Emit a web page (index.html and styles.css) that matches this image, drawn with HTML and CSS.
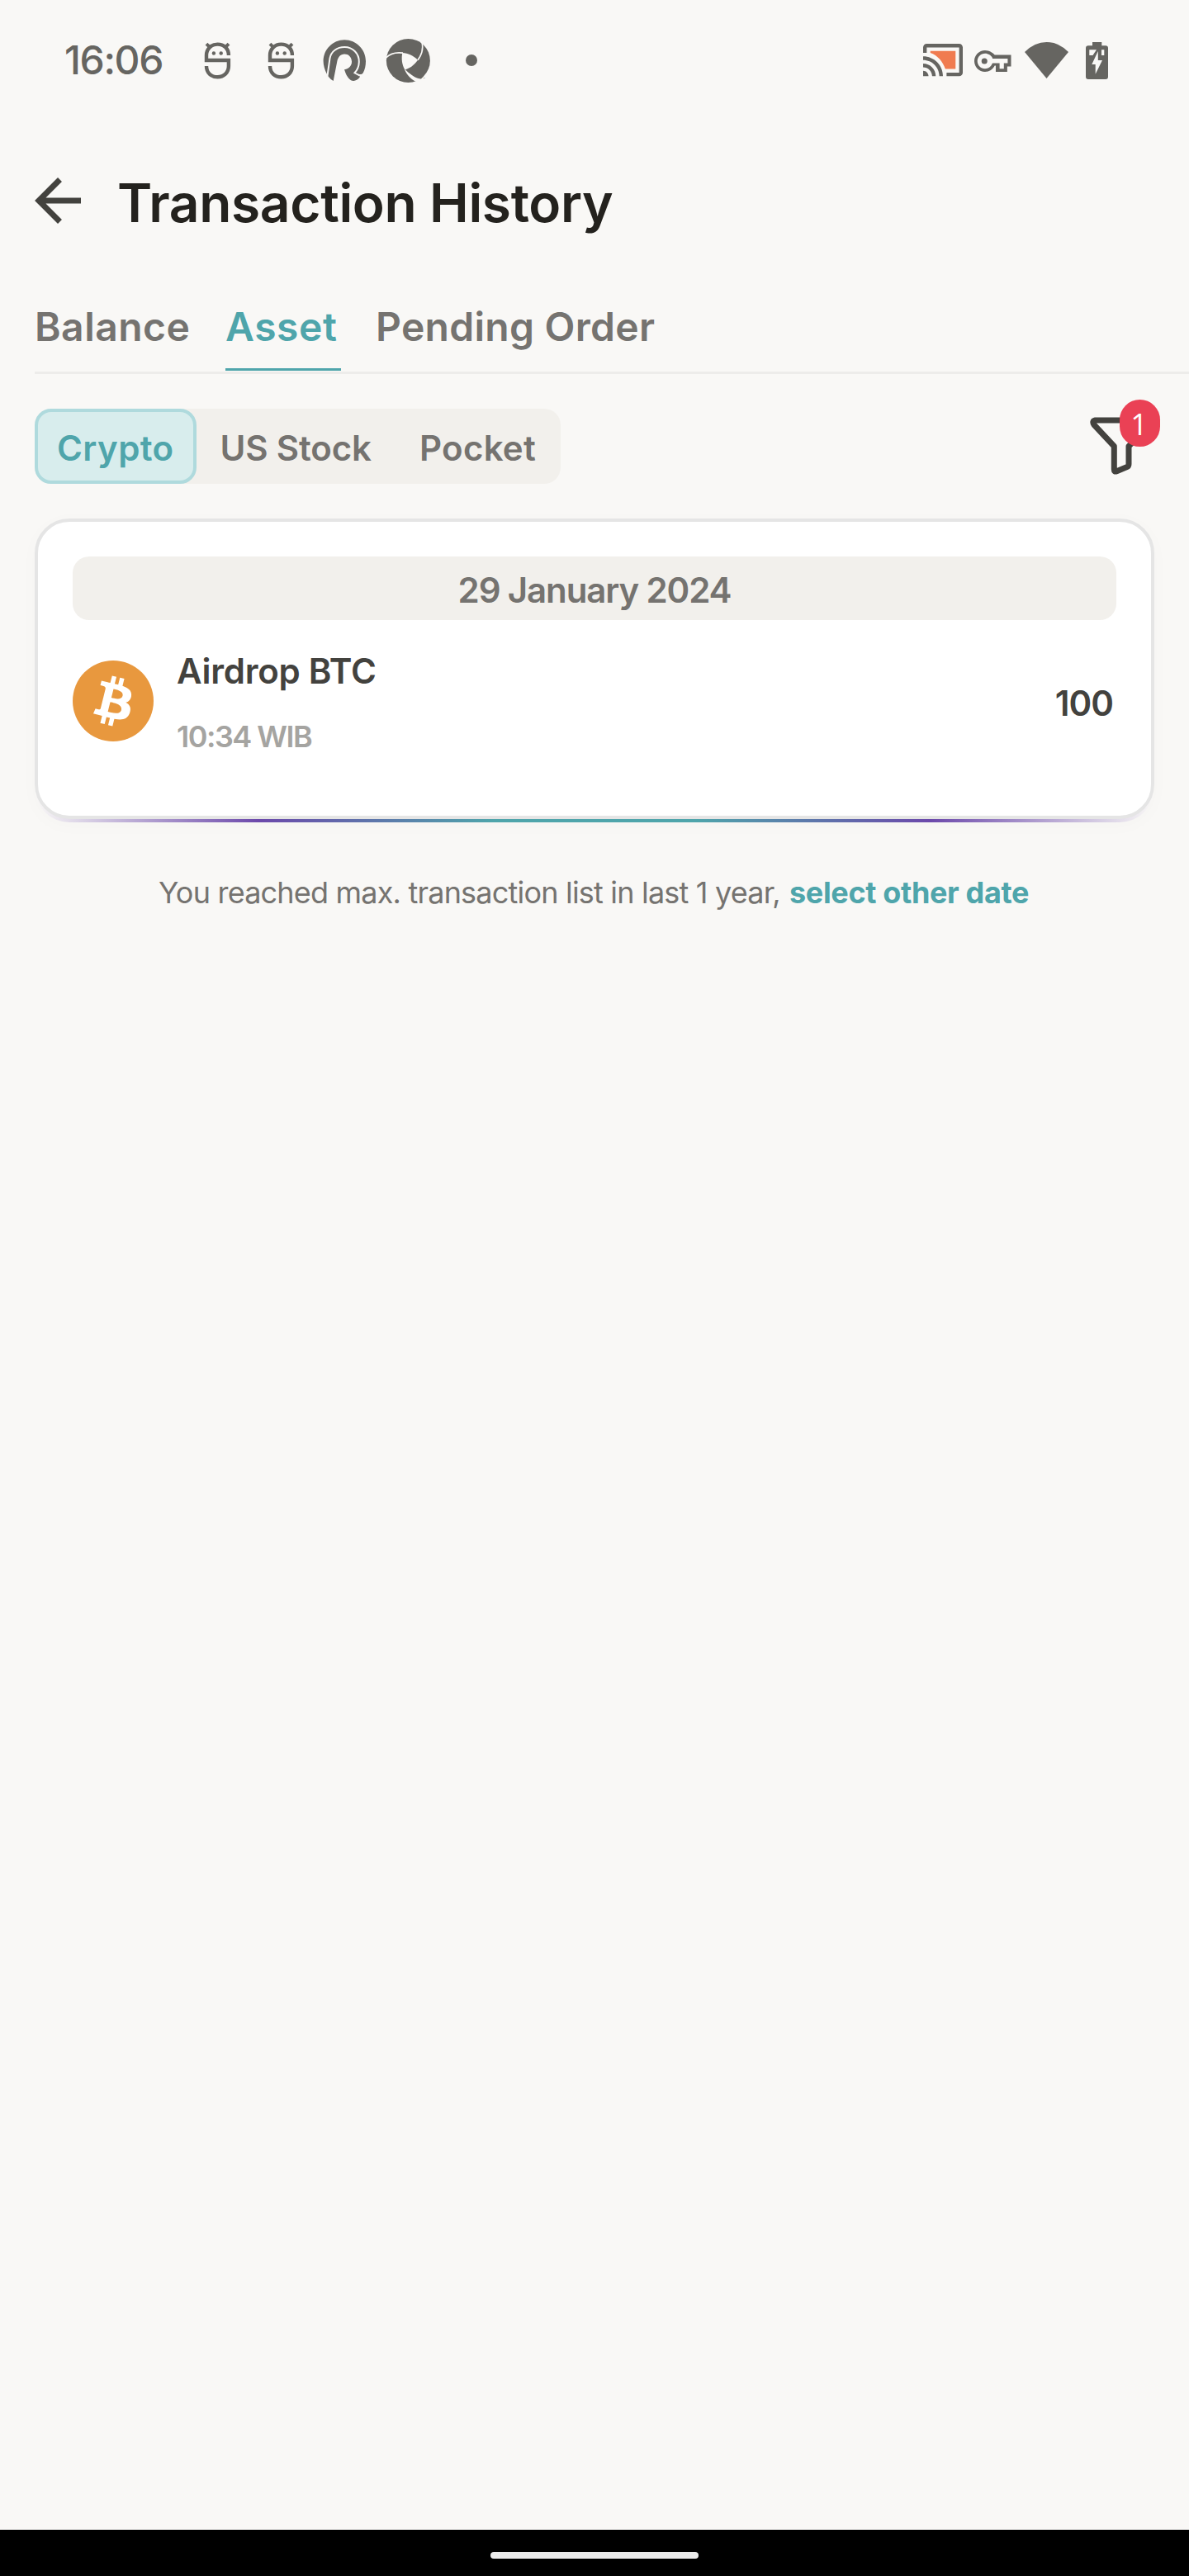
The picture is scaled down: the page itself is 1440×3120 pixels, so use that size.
FILE: index.html
```
<!DOCTYPE html>
<html lang="en">
<head>
<meta charset="utf-8">
<title>Transaction History</title>
<link rel="stylesheet" href="styles.css">
</head>
<body>
<div class="screen">
  <div class="status">
    <div class="status-left">
      <span class="clock">16:06</span>
      <svg class="bot" viewBox="247 50 33 47"><use href="#bot"/></svg>
      <svg class="bot bot-second" viewBox="247 50 33 47"><use href="#bot"/></svg>
      <svg class="arch" viewBox="391 47 53 53">
        <path fill="#666561" d="M395.8 89.5C393.2 84.500 391.6 79 391.600 74C391.600 60 403 48.200 417.300 48.200C431.500 48.200 443 60 443 74C443 79.500 442 84.500 439.600 88.500C438 90.500 436 90 434 89.700Q436.500 92 435.700 93.600Q431 99.500 425 97.300C420 93.500 418.500 88.500 417 84.300C423 83.500 426.300 79 426 74.500C425.800 69 422 65.600 417.300 65.600C412 65.600 409.300 69.500 408.300 74.500L403.700 98Q400.500 96.500 397.500 92.500Z"/>
        <path fill="none" stroke="#f9f8f6" stroke-width="2" d="M396.400 92.500L399.500 70.500C401 62.300 408 57 417.300 57C427.500 57 435 65 434.800 75C434.700 80.500 433 84.500 429.500 88.300L435.800 91.700"/>
      </svg>
      <svg class="shutter" viewBox="467 46 54 54">
        <circle cx="494.400" cy="73.400" r="26.500" fill="#666561"/>
        <path fill="#f9f8f6" d="M487.300 64C494 64.500 501 67.500 506 72.700C501.500 79 496 83 490.300 84.300C486.500 78 486 70.500 487.300 64Z"/>
        <path fill="none" stroke="#f9f8f6" stroke-width="1.700" d="M467.500 70C473 64.500 480 63 488 64.200M510.700 50C513 58 511 66 506 72.700"/>
        <path fill="#f9f8f6" d="M489.800 83.800C492.500 90.500 497 95.500 503.500 98.800L508 101L514 94.700C504 94 496.500 90.500 490.300 83.800Z"/>
        <path fill="#666561" d="M494.500 87C499 92 504.500 95 510 95.500L512.500 92.400C506 92.500 500 90.500 494.500 87Z"/>
        <text x="512.500" y="97" font-size="3.500" fill="#666561" font-family="Inter, sans-serif">™</text>
      </svg>
      <span class="dot"></span>
    </div>
    <div class="status-right">
      <svg class="cast" viewBox="1 3 22 18">
        <path fill="#666561" d="M21 3H3c-1.100 0-2 .9-2 2v3h2V5h18v14h-7v2h7c1.100 0 2-.9 2-2V5c0-1.100-.9-2-2-2zM1 18v3h3c0-1.660-1.340-3-3-3zm0-4v2c2.760 0 5 2.240 5 5h2c0-3.870-3.130-7-7-7zm0-4v2c4.970 0 9 4.030 9 9h2c0-6.080-4.930-11-11-11z"/>
        <path fill="#f07b50" d="M19 7H5v1c4 1.400 7 4.800 8.300 9H19V7z"/>
      </svg>
      <svg class="key" viewBox="0 5 24 14">
        <path fill="#666561" d="M22 19h-8v-4h-.68c-1.140 2.420-3.600 4-6.320 4-3.860 0-7-3.140-7-7s3.140-7 7-7c2.720 0 5.170 1.580 6.320 3H24v7.500h-2.500V19zm-5.500-2h2.800v-3.600h2.500v-3H11.940l-.23-.67C11.010 8.340 9.110 7 7 7c-2.760 0-5 2.240-5 5s2.240 5 5 5c2.110 0 4.010-1.340 4.710-3.330l.23-.27h4.560V17z"/>
        <circle cx="6.600" cy="12" r="1.900" fill="#666561"/>
      </svg>
      <svg class="wifi" viewBox="0 0 53 44"><path fill="#666561" d="M0 12Q12 0 26.500 0T53 12L26.500 44Z"/></svg>
      <svg class="battery" viewBox="0 0 27 45">
        <path fill="#666561" d="M8 0H19.300V4.300H24Q27 4.300 27 7.300V42Q27 45 24 45H3Q0 45 0 42V7.300Q0 4.300 3 4.300H8Z"/>
        <path fill="#f9f8f6" d="M4.300 9.300H13L8.500 16H4.300ZM19 9.300H22.300V16H19Z"/>
        <path fill="#f9f8f6" d="M14.800 11V22H20L11.700 38.700V27H7.300Z"/>
      </svg>
    </div>
  </div>

  <header class="header">
    <svg class="back" viewBox="0 0 56 56"><path fill="none" stroke="#43423e" stroke-width="7" d="M56 28H5M30.500 2.500L5 28L30.500 53.500"/></svg>
    <h1 class="title">Transaction History</h1>
  </header>

  <nav class="tabs">
    <span class="tab tab-balance">Balance</span>
    <span class="tab tab-asset">Asset</span>
    <span class="tab tab-pending">Pending Order</span>
  </nav>

  <div class="filters">
    <div class="segments">
      <span class="segment segment-crypto">Crypto</span>
      <span class="segment segment-stock">US Stock</span>
      <span class="segment segment-pocket">Pocket</span>
    </div>
    <div class="filter">
      <svg class="funnel" viewBox="1316 504 80 72"><path fill="none" stroke="#43423e" stroke-width="7" stroke-linejoin="round" d="M1324.500 509H1388Q1394 510 1390.500 514.500L1365 540.500V562Q1365 564.700 1363 565.500L1350.500 570.800Q1347.300 572 1347.300 568.500V540.500L1323 514.500Q1320 510 1324.500 509Z"/></svg>
      <span class="badge">1</span>
    </div>
  </div>

  <div class="card-edge">
    <section class="card">
      <div class="date">29 January 2024</div>
      <div class="row">
        <svg class="coin" viewBox="0 0 32 32">
          <circle cx="16" cy="16" r="16" fill="#e8983e"/>
          <path fill="#fff" d="M23.189 14.020c.314-2.096-1.283-3.223-3.465-3.975l.708-2.840-1.728-.43-.69 2.765c-.454-.114-.92-.22-1.385-.326l.695-2.783L15.596 6l-.708 2.839c-.376-.086-.746-.17-1.104-.26l.002-.009-2.384-.595-.46 1.846s1.283.294 1.256.312c.7.175.826.638.805 1.006l-.806 3.235c.048.012.11.03.18.057l-.183-.045-1.130 4.532c-.086.212-.303.531-.793.41.018.025-1.256-.313-1.256-.313l-.858 1.978 2.250.561c.418.105.828.215 1.231.318l-.715 2.872 1.727.43.708-2.840c.472.127.93.245 1.378.357l-.706 2.828 1.728.43.715-2.866c2.948.558 5.164.333 6.097-2.333.752-2.146-.037-3.385-1.588-4.192 1.130-.26 1.980-1.003 2.207-2.538zm-3.950 5.538c-.533 2.147-4.148.986-5.320.695l.95-3.805c1.172.293 4.929.872 4.370 3.110zm.535-5.569c-.487 1.953-3.495.96-4.470.717l.86-3.450c.975.243 4.118.696 3.610 2.733z"/>
        </svg>
        <div class="details">
          <div class="name">Airdrop BTC</div>
          <div class="time">10:34 WIB</div>
        </div>
        <div class="amount">100</div>
      </div>
    </section>
  </div>

  <p class="note"><span class="note-text">You reached max. transaction list in last 1 year,</span><a class="note-link">select other date</a></p>

  <div class="navbar"><span class="pill"></span></div>
</div>

<svg class="defs" width="0" height="0">
  <defs>
    <g id="bot">
      <path fill="none" stroke="#666561" stroke-width="4.400" d="M250 80C250 88.500 256 93.200 263.500 93.200C271 93.200 276.900 88 276.900 80V73H250V67C250 59 256 53.600 263.500 53.600C271 53.600 276.900 58.500 276.900 67"/>
      <path fill="none" stroke="#666561" stroke-width="4" d="M250 53.200L255 58.200M277 53.200L272 58.200"/>
      <circle cx="258.900" cy="64.500" r="2.200" fill="#666561"/><circle cx="267.700" cy="64.500" r="2.200" fill="#666561"/>
    </g>
  </defs>
</svg>
</body>
</html>
```
FILE: styles.css
```
* { box-sizing: border-box; }
body { margin: 0; background: #f9f8f6; font-family: Inter, "Liberation Sans", sans-serif; }
svg { display: block; flex: none; }
.defs { position: absolute; }
.screen { width: 1440px; height: 3120px; display: flex; flex-direction: column; overflow: hidden; white-space: nowrap; }

.status { height: 145px; padding: 0 98px 0 78px; display: flex; justify-content: space-between; align-items: center; }
.status-left, .status-right { display: flex; align-items: center; }
.clock { width: 169px; font-size: 48px; font-weight: 500; line-height: 58px; letter-spacing: -1.370px; color: #666561; }
.bot { width: 33px; height: 47px; margin-top: 2px; }
.bot-second { margin-left: 44px; }
.arch { width: 53px; height: 53px; margin: 2px 0 0 34px; }
.shutter { width: 54px; height: 54px; margin: 1px 0 0 23px; }
.dot { width: 14px; height: 14px; margin-left: 43px; border-radius: 50%; background: #666561; }
.cast { width: 48px; height: 39.300px; margin-top: 1px; }
.key { width: 44.500px; height: 26px; margin: 2px 0 0 14px; }
.wifi { width: 53px; height: 44px; margin-left: 16.500px; }
.battery { width: 27px; height: 45px; margin: 1px 0 0 21px; }

.header { height: 201px; padding-left: 42px; display: flex; align-items: center; gap: 44px; }
.back { width: 56px; height: 56px; margin-top: -5px; }
.title { margin: 0; font-size: 64px; font-weight: 600; letter-spacing: -0.340px; color: #24221e; }

.tabs { height: 107px; margin-left: 42px; border-bottom: 3px solid #edecea; display: flex; gap: 42px; }
.tab { height: 103px; line-height: 99px; font-size: 48px; font-weight: 600; color: #757370; }
.tab-balance { width: 189px; letter-spacing: 0.470px; }
.tab-asset { width: 140px; letter-spacing: 0.580px; color: #4fa5ab; border-bottom: 3px solid #4fa5ab; }
.tab-pending { letter-spacing: 0.280px; }

.filters { margin: 42px 35px 0 42px; height: 91px; display: flex; justify-content: space-between; }
.segments { display: flex; border-radius: 20px; background: #f2f0ec; }
.segment { line-height: 95px; font-size: 42px; font-weight: 600; color: #757370; }
.segment-crypto { width: 196px; padding-left: 23px; border: 4px solid #afdadd; border-radius: 20px; background: #d8eded; color: #4fa5ab; line-height: 88px; letter-spacing: 0.380px; }
.segment-stock { width: 241px; padding-left: 28.500px; letter-spacing: -0.150px; }
.segment-pocket { width: 200px; padding-left: 29px; letter-spacing: 0.270px; }
.filter { position: relative; width: 89px; }
.funnel { width: 80px; height: 72px; margin-top: 9px; margin-left: 2px; }
.badge { position: absolute; top: -11px; right: 0; width: 49px; height: 57px; border-radius: 25px; background: #ea4155; color: #fff; font: 500 36px/59px "Open Sans", sans-serif; text-align: center; padding-right: 2px; }

.card-edge { margin: 42px 42px 0; padding-bottom: 4px; border-radius: 42px; background: linear-gradient(90deg, rgba(108,73,171,0) 0%, #6c49ab 20%, #4fa5ab 41%, #4fa5ab 59%, #6c49ab 80%, rgba(108,73,171,0) 100%) bottom / 100% 60px no-repeat; box-shadow: 0 4px 24px rgba(0,0,0,0.020); }
.card { height: 364px; padding: 42px; border: 4px solid #e5e5e5; border-radius: 42px; background: #fff; }
.date { height: 77px; border-radius: 20px; background: #f2f0ec; text-align: center; font-size: 42px; font-weight: 600; line-height: 82px; letter-spacing: -1.120px; color: #757370; }
.row { margin-top: 35px; display: flex; align-items: center; }
.coin { width: 98px; height: 98px; margin-top: -3px; }
.details { flex: 1; padding-left: 28px; }
.name { font-size: 42px; font-weight: 600; line-height: 54px; letter-spacing: -0.250px; color: #43423e; }
.time { margin-top: 29px; font-size: 36px; font-weight: 600; line-height: 46px; letter-spacing: -1.510px; color: #a5a4a1; }
.amount { margin-top: 2px; padding-right: 4px; font-size: 42px; font-weight: 600; letter-spacing: -1px; color: #43423e; }

.note { margin: 62px 0 0 192px; display: flex; font-size: 36px; line-height: 46px; }
.note-text { width: 764px; letter-spacing: -0.800px; color: #757370; }
.note-link { font-weight: 700; letter-spacing: -0.350px; color: #4fa5ab; }

.navbar { height: 56px; margin-top: auto; padding-top: 27px; background: #000; }
.pill { display: block; width: 252px; height: 8px; margin: 0 auto; border-radius: 4px; background: #ebebeb; }
```
